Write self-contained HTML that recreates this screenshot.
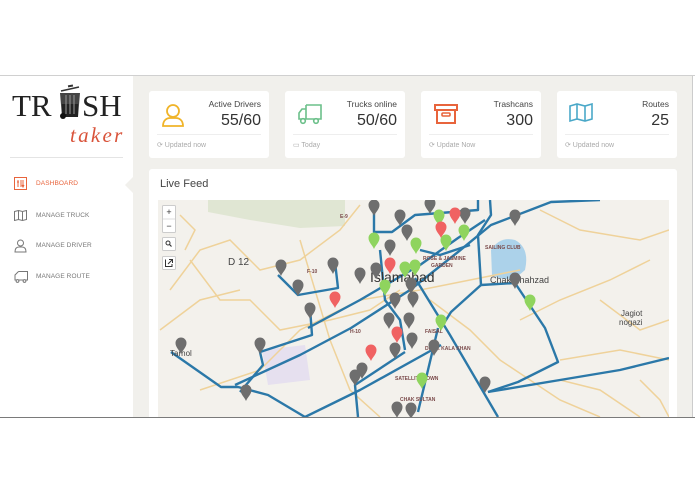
<!DOCTYPE html>
<html><head><meta charset="utf-8">
<style>
*{margin:0;padding:0;box-sizing:border-box}
body{width:695px;height:494px;background:#fff;font-family:"Liberation Sans",sans-serif;position:relative;overflow:hidden}
.abs{position:absolute}
#main{left:133px;top:76px;width:559px;height:341px;background:#f1f0ec}
#side{left:0;top:76px;width:133px;height:341px;background:#fff}
.card{position:absolute;background:#fff;border-radius:3px;top:15px;width:120px;height:67px}
.card .t{position:absolute;right:8px;top:8px;font-size:8.5px;color:#444}
.card .v{position:absolute;right:8px;top:21px;font-size:16px;color:#333}
.card .d{position:absolute;left:8px;right:8px;top:43px;border-top:1px solid #eee}
.card .f{position:absolute;left:8px;top:50px;font-size:7px;color:#aaa}
.card svg.ic{position:absolute;left:12px;top:12px}
.menu{position:absolute;left:36px;font-size:6.5px;color:#777;letter-spacing:.1px}
</style></head><body>
<div class="abs" style="left:0;top:75px;width:695px;height:1px;background:#d0d0d0"></div>
<div id="side" class="abs">
  <div class="abs" style="left:12px;top:12px;font-family:'Liberation Serif',serif;font-size:31px;color:#222">TR</div>
  <div class="abs" style="left:82px;top:12px;font-family:'Liberation Serif',serif;font-size:31px;color:#222">SH</div>
  <svg class="abs" style="left:58px;top:8px" width="24" height="36" viewBox="0 0 24 36">
    <path d="M3 7 L21 3" stroke="#333" stroke-width="1.5"/><rect x="10" y="1" width="5" height="2" fill="#333" transform="rotate(-10 12 2)"/>
    <path d="M2 9 H22 L20 33 H4 Z" fill="#444"/><path d="M4 20 H20 L20 33 H4Z" fill="#222"/>
    <path d="M8 11 V30 M12 11 V30 M16 11 V30" stroke="#999" stroke-width="1"/>
    <circle cx="5" cy="32" r="3" fill="#111"/>
  </svg>
  <div class="abs" style="left:70px;top:47px;font-family:'Liberation Serif',serif;font-style:italic;font-size:21px;color:#d9533a;letter-spacing:2.3px">taker</div>
  <div class="abs" style="left:10px;top:81px;width:113px;height:1px;background:#e4e4e4"></div>
  <svg class="abs" style="left:14px;top:101px" width="13" height="13"><rect x=".5" y=".5" width="12" height="12" fill="none" stroke="#e8643c"/><path d="M4 3v7M3 5h2M7 3v7M9 3v7M8 8l1 2 1-2" stroke="#e8643c" stroke-width="1" fill="none"/></svg>
  <div class="menu" style="top:104px;color:#e8643c">DASHBOARD</div>
  <svg class="abs" style="left:14px;top:134px" width="13" height="11"><path d="M.5 1.5l4-1 4 1 4-1v9l-4 1-4-1-4 1z M4.5.5v9 M8.5 1.5v9" fill="none" stroke="#777"/></svg>
  <div class="menu" style="top:136px">MANAGE TRUCK</div>
  <svg class="abs" style="left:14px;top:163px" width="13" height="14"><circle cx="6.5" cy="4" r="3" fill="none" stroke="#777"/><path d="M1 13 C1 9 3 8 5 8 H8 C10 8 12 9 12 13Z" fill="none" stroke="#777"/></svg>
  <div class="menu" style="top:166px">MANAGE DRIVER</div>
  <svg class="abs" style="left:14px;top:195px" width="14" height="12"><path d="M4.5 .5H13.5V9H4.5 M4.5 .5L1 4V9H4.5" fill="none" stroke="#777"/><circle cx="3.5" cy="10" r="1.4" fill="#fff" stroke="#777"/><circle cx="10.5" cy="10" r="1.4" fill="#fff" stroke="#777"/></svg>
  <div class="menu" style="top:197px">MANAGE ROUTE</div>
</div>
<div class="abs" style="left:125px;top:177px;width:0;height:0;border-top:8px solid transparent;border-bottom:8px solid transparent;border-right:8px solid #f1f0ec"></div>
<div id="main" class="abs">
  <div class="card" style="left:16px">
    <svg class="ic" width="24" height="26" viewBox="0 0 24 26"><circle cx="12" cy="8" r="6" fill="none" stroke="#f0b429" stroke-width="1.8"/><path d="M2 23 C2 17 6 15 9 15 H15 C18 15 22 17 22 23Z" fill="none" stroke="#f0b429" stroke-width="1.8"/></svg>
    <div class="t">Active Drivers</div><div class="v">55/60</div><div class="d"></div><div class="f">⟳ Updated now</div></div>
  <div class="card" style="left:152px">
    <svg class="ic" width="26" height="22" viewBox="0 0 26 22"><path d="M9 2H24V16H9 M9 2V16 M9 6H5L2 10V16H9" fill="none" stroke="#6cc08a" stroke-width="1.6"/><circle cx="6" cy="18" r="2.3" fill="#fff" stroke="#6cc08a" stroke-width="1.6"/><circle cx="19" cy="18" r="2.3" fill="#fff" stroke="#6cc08a" stroke-width="1.6"/></svg>
    <div class="t">Trucks online</div><div class="v">50/60</div><div class="d"></div><div class="f">▭ Today</div></div>
  <div class="card" style="left:288px">
    <svg class="ic" width="26" height="22" viewBox="0 0 26 22"><rect x="2" y="2" width="22" height="5" fill="none" stroke="#e8643c" stroke-width="2"/><path d="M4 7V20H22V7" fill="none" stroke="#e8643c" stroke-width="2"/><rect x="9" y="10" width="8" height="3" rx="1" fill="none" stroke="#e8643c" stroke-width="1.6"/></svg>
    <div class="t">Trashcans</div><div class="v">300</div><div class="d"></div><div class="f">⟳ Update Now</div></div>
  <div class="card" style="left:424px">
    <svg class="ic" width="24" height="20" viewBox="0 0 24 20"><path d="M1 3l7-2 8 2 7-2v15l-7 2-8-2-7 2z M8 1v15 M16 3v15" fill="none" stroke="#4aa8c8" stroke-width="1.6"/></svg>
    <div class="t">Routes</div><div class="v">25</div><div class="d"></div><div class="f">⟳ Updated now</div></div>
  <div class="abs" style="left:16px;top:93px;width:528px;height:260px;background:#fff;border-radius:3px">
    <div class="abs" style="left:11px;top:9px;font-size:11px;color:#444">Live Feed</div>
  </div>
</div>
<svg class="abs" style="left:0;top:0" width="695" height="494">
  <defs>
    <path id="pin" d="M0 11 C-1.5 7 -5.5 4.5 -5.5 0 A5.5 5.5 0 1 1 5.5 0 C5.5 4.5 1.5 7 0 11Z"/>
    <clipPath id="mc"><rect x="158" y="200" width="511" height="217"/></clipPath>
  </defs>
  <g clip-path="url(#mc)">
    <rect x="158" y="200" width="511" height="217" fill="#f3f1ec"/>
    <path d="M208 200 H345 V226 L300 228 L250 220 L208 212Z" fill="#e0e6d3"/>
    <path d="M491 250 Q500 236 515 240 Q530 248 525 270 Q510 285 492 275Z" fill="#acd2ea"/>
    <path d="M262 350 L305 345 L310 380 L268 385Z" fill="#e6e0ef"/>
    <g fill="none" stroke="#efd29a" stroke-width="1.5">
      <path d="M170 290 L200 250 L230 240 L260 270 L300 260 L340 230 L360 205"/>
      <path d="M190 260 L220 300 L250 300 L280 330 L330 320 L370 310 L400 290"/>
      <path d="M200 390 L260 370 L300 330 L360 300 L420 290 L470 280 L520 270"/>
      <path d="M300 240 L330 340 L350 390 L380 417"/>
      <path d="M430 300 L470 330 L500 360 L560 400 L600 417"/>
      <path d="M540 210 L580 230 L640 240 L669 230"/>
      <path d="M520 320 L560 300 L610 280 L650 260"/>
      <path d="M600 300 L640 330 L669 320 M560 360 L620 350 L669 360"/>
      <path d="M160 330 L200 300 L240 290 M640 380 L660 400 L669 417"/>
      <path d="M180 215 L195 230 L185 250 M560 380 L600 390 L640 417"/>
    </g>
    <g fill="none" stroke="#2b78a8" stroke-width="2.4" stroke-linejoin="round">
      <path d="M171 352 L221 387 L238 387 L268 395 L305 417"/>
      <path d="M235 385 L300 355 L351 328 L410 290 L458 252 L491 225 L551 202 L600 200"/>
      <path d="M308 328 L360 300 L420 265 L458 238 L485 220"/>
      <path d="M415 278 L450 335 L498 417"/>
      <path d="M438 328 L428 370 L418 412"/>
      <path d="M481 285 L515 283 L545 328 L558 362 L518 382 L488 392"/>
      <path d="M481 285 L478 235 L491 215 L490 200"/>
      <path d="M481 285 L451 312 L441 328"/>
      <path d="M488 392 L560 380 L620 370 L669 358"/>
      <path d="M305 417 L360 390 L441 345"/>
      <path d="M358 417 L355 385 L405 352"/>
      <path d="M278 275 L298 295 L338 288 L335 262"/>
      <path d="M374 200 L374 232 L392 232 L415 215 L478 210 L478 200"/>
      <path d="M310 308 L312 335 L260 352 L263 365 L240 392"/>
      <path d="M380 250 L385 300 L400 320 L405 350"/>
      <path d="M420 250 L440 255 L470 245"/>
    </g>
    <g font-size="10" fill="#444">
      <text x="228" y="265">D 12</text><text x="370" y="282" font-size="14" fill="#333">Islamabad</text>
      <text x="490" y="283" font-size="9">Chak Shahzad</text>
      <text x="621" y="316" font-size="8">Jagiot</text><text x="619" y="325" font-size="8">nogazi</text>
      <text x="170" y="356" font-size="8">Tarnol</text>
      <g font-size="5" font-weight="bold" fill="#7a4a4a"><text x="485" y="249">SAILING CLUB</text><text x="423" y="260">ROSE &amp; JASMINE</text><text x="431" y="267">GARDEN</text><text x="425" y="333">FAISAL</text><text x="425" y="350">DHOK KALA KHAN</text><text x="395" y="380">SATELLITE TOWN</text><text x="400" y="401">CHAK SULTAN</text><text x="350" y="333">H-10</text><text x="340" y="218">E-9</text><text x="307" y="273">F-10</text></g>
    </g>
    <g fill="#6e6e6e">
      <use href="#pin" x="374" y="205"/><use href="#pin" x="400" y="215"/><use href="#pin" x="430" y="203"/><use href="#pin" x="407" y="230"/><use href="#pin" x="465" y="213"/><use href="#pin" x="390" y="245"/><use href="#pin" x="515" y="215"/><use href="#pin" x="281" y="265"/><use href="#pin" x="333" y="263"/><use href="#pin" x="360" y="273"/><use href="#pin" x="376" y="268"/><use href="#pin" x="298" y="285"/><use href="#pin" x="411" y="283"/><use href="#pin" x="395" y="298"/><use href="#pin" x="413" y="297"/><use href="#pin" x="310" y="308"/><use href="#pin" x="389" y="318"/><use href="#pin" x="409" y="318"/><use href="#pin" x="412" y="338"/><use href="#pin" x="434" y="345"/><use href="#pin" x="395" y="348"/><use href="#pin" x="181" y="343"/><use href="#pin" x="260" y="343"/><use href="#pin" x="515" y="278"/><use href="#pin" x="355" y="375"/><use href="#pin" x="362" y="368"/><use href="#pin" x="485" y="382"/><use href="#pin" x="246" y="390"/><use href="#pin" x="397" y="407"/><use href="#pin" x="411" y="408"/>
    </g>
    <g fill="#8fd45e">
      <use href="#pin" x="439" y="215"/><use href="#pin" x="464" y="230"/><use href="#pin" x="374" y="238"/><use href="#pin" x="416" y="243"/><use href="#pin" x="446" y="240"/><use href="#pin" x="405" y="267"/><use href="#pin" x="415" y="265"/><use href="#pin" x="385" y="285"/><use href="#pin" x="441" y="320"/><use href="#pin" x="530" y="300"/><use href="#pin" x="422" y="378"/>
    </g>
    <g fill="#f06262">
      <use href="#pin" x="455" y="213"/><use href="#pin" x="441" y="227"/><use href="#pin" x="390" y="263"/><use href="#pin" x="335" y="297"/><use href="#pin" x="397" y="332"/><use href="#pin" x="371" y="350"/>
    </g>
    <g fill="#fff" stroke="#ccc">
      <rect x="162.5" y="205.5" width="13" height="27" rx="1"/><rect x="162.5" y="237.5" width="13" height="13" rx="1"/><rect x="162.5" y="256.5" width="13" height="13" rx="1"/>
    </g>
    <path d="M163 219 H175" stroke="#ddd"/>
    <g font-size="9" fill="#333" text-anchor="middle"><text x="169" y="215">+</text><text x="169" y="229">−</text></g>
    <circle cx="168" cy="243" r="2" fill="none" stroke="#333"/><path d="M169.5 244.5 L171.5 246.5" stroke="#333" stroke-width="1.2"/>
    <path d="M166 260 H165.5 V266.5 H172 V264 M169 259.5 H172.5 V263 M172.5 259.5 L168 264" fill="none" stroke="#333"/>
  </g>
</svg>
<div class="abs" style="left:692px;top:76px;width:1px;height:341px;background:#ccc"></div>
<div class="abs" style="left:0;top:417px;width:695px;height:1px;background:#7a7a7a"></div>
<div class="abs" style="left:0;top:418px;width:695px;height:76px;background:#fff"></div>
</body></html>
